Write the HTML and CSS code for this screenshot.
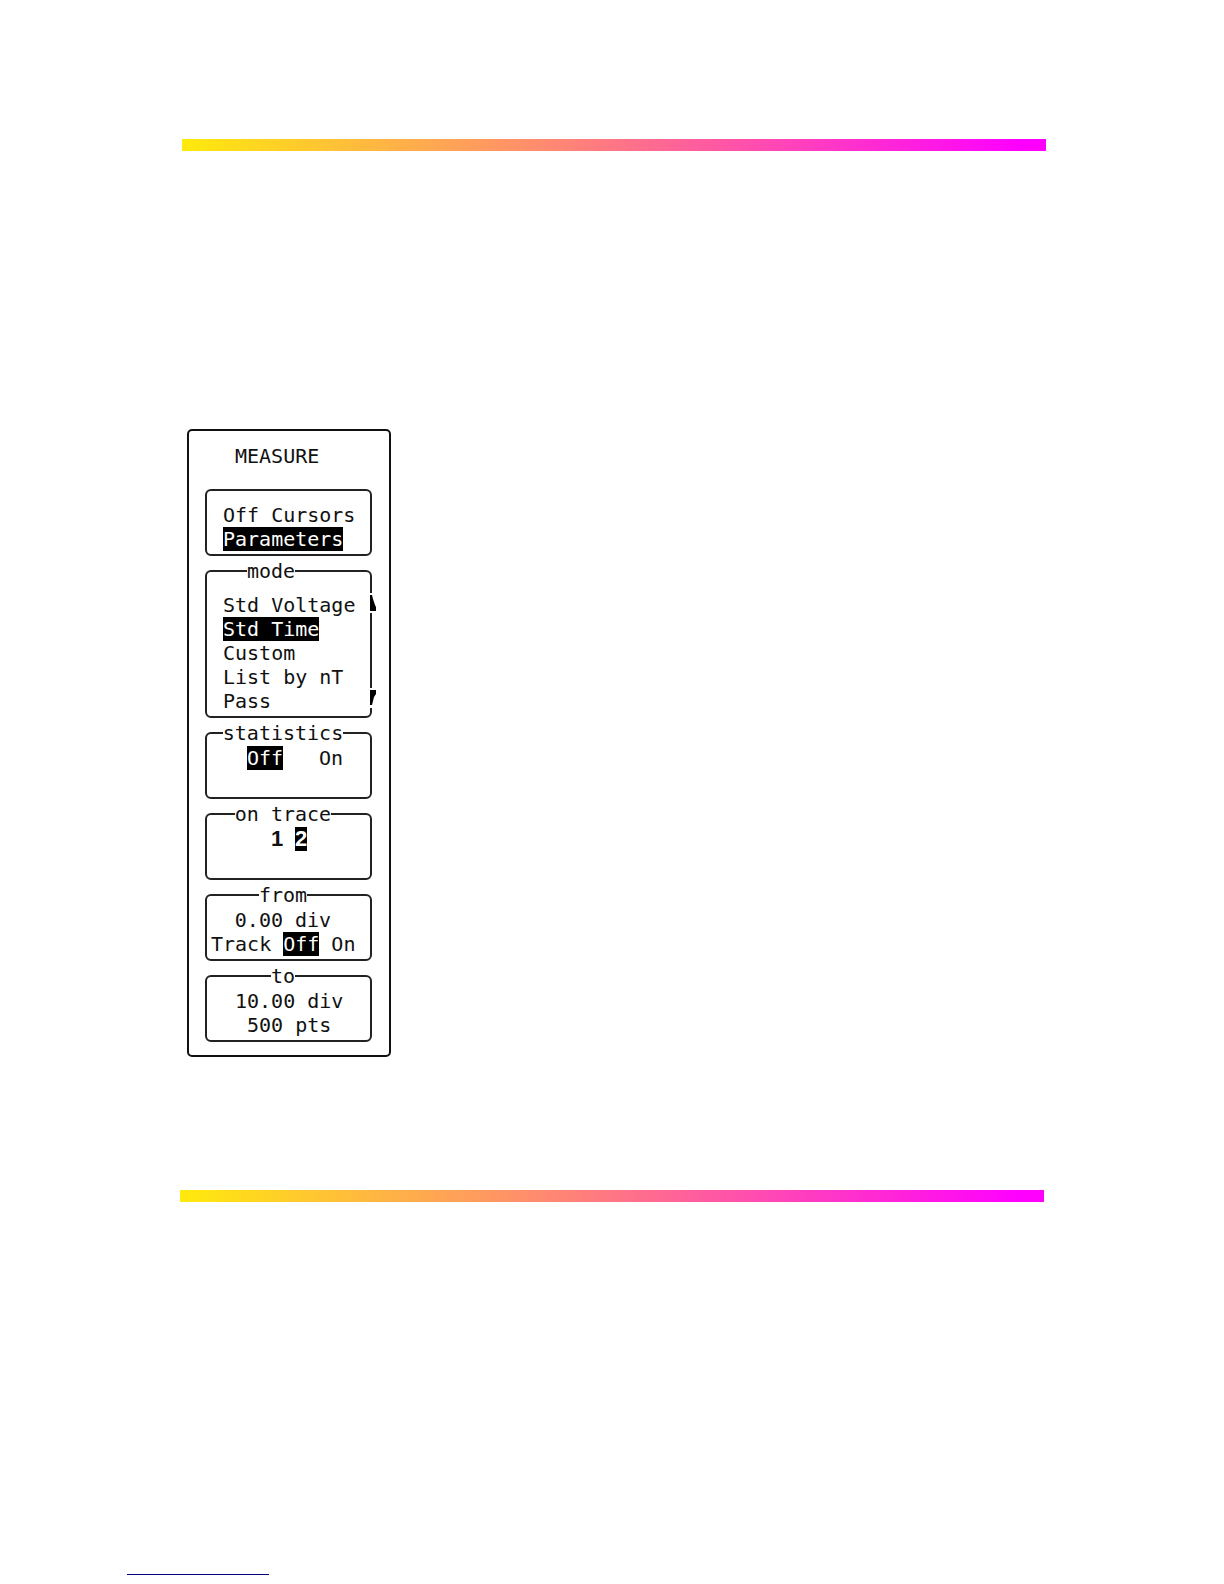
FILE: index.html
```html
<!DOCTYPE html>
<html lang="en">
<head>
  <meta charset="UTF-8">
  <title>Measure menu</title>
  <link rel="stylesheet" href="styles.css">
</head>
<body>
  <main class="page">
    <div class="bar top"></div>

    <section class="panel">
      <h1>MEASURE</h1>

      <div class="group">
        <div class="row indent">
          <button type="button">Off</button>
          <button type="button">Cursors</button>
        </div>
        <div class="row indent">
          <button type="button" class="on">Parameters</button>
        </div>
      </div>

      <fieldset class="mode">
        <legend>mode</legend>
        <div class="row indent"><button type="button">Std Voltage</button></div>
        <div class="row indent"><button type="button" class="on">Std Time</button></div>
        <div class="row indent"><button type="button">Custom</button></div>
        <div class="row indent"><button type="button">List by nT</button></div>
        <div class="row indent"><button type="button">Pass</button></div>
        <svg class="arrow up" width="8" height="20" viewBox="0 0 8 20">
          <rect width="8" height="20" fill="#fff"/>
          <path d="M1 2H3L4 6L6 12L7 14V18H1Z"/>
        </svg>
        <svg class="arrow down" width="8" height="20" viewBox="0 0 8 20">
          <rect width="8" height="20" fill="#fff"/>
          <path d="M1 2H7V6L5 9L4 13L3 17H1Z"/>
        </svg>
      </fieldset>

      <fieldset>
        <legend>statistics</legend>
        <div class="row center wide">
          <button type="button" class="on">Off</button>
          <button type="button">On</button>
        </div>
      </fieldset>

      <fieldset>
        <legend>on trace</legend>
        <div class="row center traces">
          <button type="button" class="digit">1</button>
          <button type="button" class="digit on">2</button>
        </div>
      </fieldset>

      <fieldset>
        <legend>from</legend>
        <div class="row center">0.00 div</div>
        <div class="row">
          <span>Track</span>
          <button type="button" class="on">Off</button>
          <button type="button">On</button>
        </div>
      </fieldset>

      <fieldset>
        <legend>to</legend>
        <div class="row value">10.00 div</div>
        <div class="row value short">500 pts</div>
      </fieldset>
    </section>

    <div class="bar bottom"></div>
    <hr class="rule">
  </main>
</body>
</html>
```

FILE: styles.css
```css
* { box-sizing: border-box; }

body {
  margin: 0;
  background: #fff;
  color: #111;
  font: 20px/24px "DejaVu Sans Mono", "Liberation Mono", monospace;
}

.page { padding: 139px 178px 8px 127px; }

/* yellow to magenta rules above and below */
.bar {
  height: 12px;
  background: linear-gradient(to right, #ffea0c, #ff8a70 42%, #ff00ff 97%);
}
.top { margin-left: 55px; }
.bottom { margin: 133px 2px 0 53px; }

.panel {
  width: 204px;
  margin: 278px 0 0 60px;
  padding: 13px 16px;
  border: 2px solid #111;
  border-radius: 5px;
}

h1 {
  margin: 0 0 21px 30px;
  font-size: 20px;
  font-weight: normal;
}

.group,
fieldset {
  width: 167px;
  margin: 0 0 3px;
  border: 2px solid #222;
  border-radius: 6px;
}
.group { padding: 12px 15px 3px 4px; }
fieldset {
  min-width: 0;
  min-height: 78px;
  padding: 1px 15px 3px 4px;
}
fieldset:last-child { margin-bottom: 0; }

legend { margin: 0 auto; padding: 0; }
.mode legend { margin-left: 36px; }

.row { display: flex; gap: 12px; height: 24px; white-space: nowrap; }
.indent { padding-left: 12px; }
.center { justify-content: center; }
.wide { gap: 36px; padding-left: 24px; }
.traces { padding-left: 12px; }
.value { padding-left: 24px; }
.short { padding-left: 36px; }

button {
  height: 24px;
  margin: 0;
  padding: 0;
  border: 0;
  background: none;
  color: inherit;
  font: inherit;
}
button.on { background: #000; color: #fff; }
.digit {
  width: 12px;
  font: bold 22px/24px "Liberation Sans", Arial, sans-serif;
}

/* scroll arrows sit over the right edge of the box */
.mode { position: relative; padding-top: 10px; }
.arrow { position: absolute; right: -7px; }
.up { top: 10px; }
.down { bottom: 8px; }

.rule {
  width: 142px;
  height: 1px;
  margin: 372px 0 0;
  border: 0;
  background: #000080;
}
```
